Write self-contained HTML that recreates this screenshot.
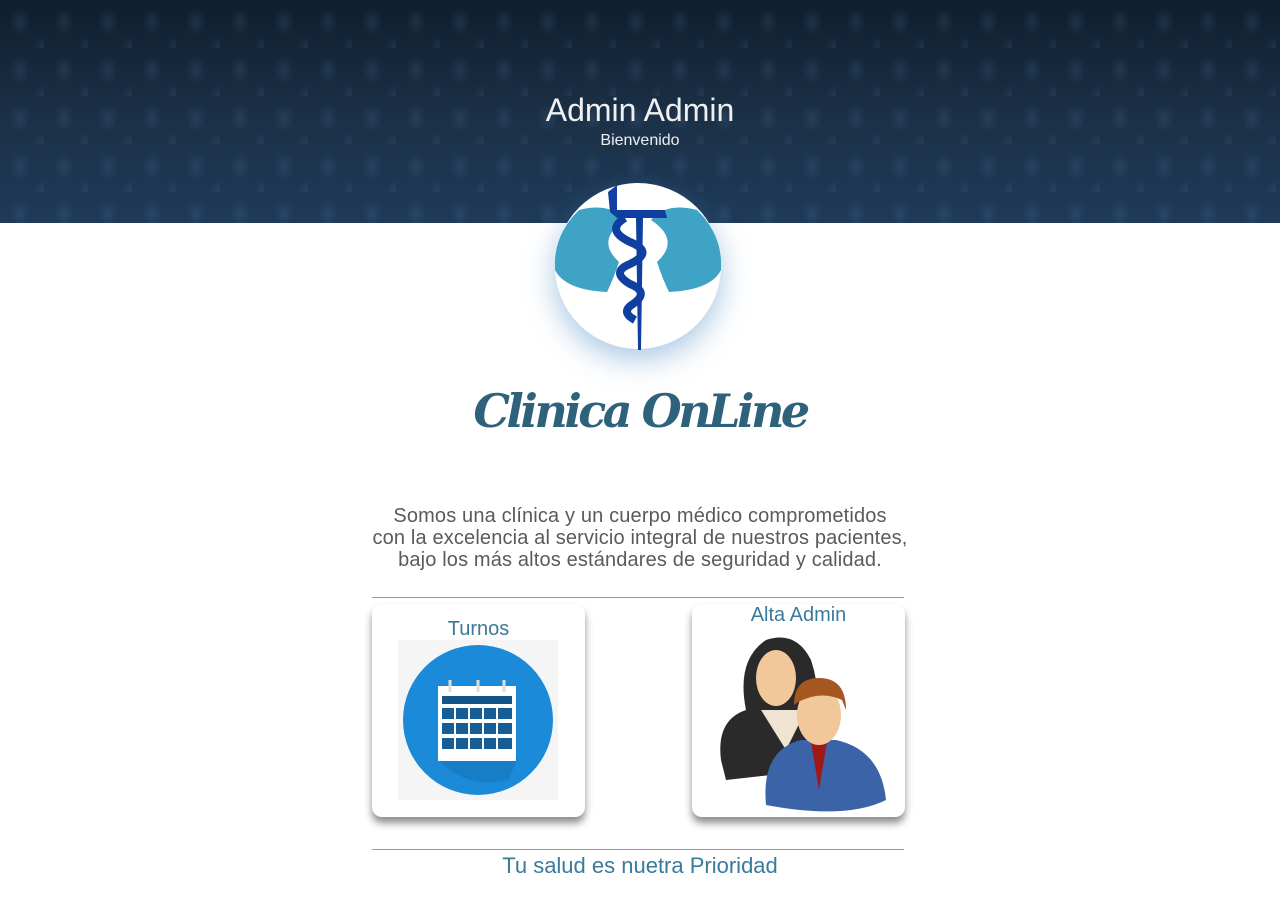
<!DOCTYPE html>
<html><head><meta charset="utf-8"><style>
*{margin:0;padding:0;box-sizing:border-box}
body{width:1280px;height:899px;background:#fff;font-family:"Liberation Sans",sans-serif;position:relative;overflow:hidden}
.hdr{position:absolute;left:0;top:0;width:1280px;height:223px;background:
radial-gradient(ellipse 10px 14px at 20px 22px,rgba(90,130,170,.18),transparent) 0 0/44px 48px,
radial-gradient(ellipse 8px 10px at 42px 46px,rgba(90,130,170,.14),transparent) 0 0/44px 48px,
linear-gradient(#0f1e2e,#1b3148 55%,#1f3a58)}
.t{position:absolute;width:1280px;text-align:center;color:#fff}
.card{position:absolute;top:604px;width:213px;height:213px;background:#fff;border-radius:10px;box-shadow:0 6px 8px rgba(0,0,0,.45)}
.ct{position:absolute;width:100%;text-align:center;color:#3a7a9a;font-size:20px}
hr{position:absolute;left:372px;width:532px;border:0;border-top:1px solid #999}
</style></head><body>
<div class="hdr"></div>
<div class="t" style="top:92px;font-size:32px;color:#f0f0f0">Admin Admin</div>
<div class="t" style="top:132px;font-size:16px;color:#eee">Bienvenido</div>
<div style="position:absolute;left:555px;top:183px;width:166px;height:166px;border-radius:50%;background:#fff;box-shadow:0 10px 30px rgba(60,130,190,.45)"></div>
<svg style="position:absolute;left:555px;top:180px" width="166" height="172" viewBox="0 0 166 172">
<path d="M24 30 Q55 22 70 40 Q40 60 64 82 Q58 100 52 112 Q10 110 0 90 Q-2 55 24 30Z" fill="#3fa3c6"/>
<path d="M142 30 Q111 22 96 40 Q126 60 102 82 Q108 100 114 112 Q156 110 166 90 Q168 55 142 30Z" fill="#3fa3c6"/>
<path d="M53 12 L62 5 L62 30 L110 30 L112 38 L88 38 L86 170 L83 170 L81 38 L62 38 L55 32Z" fill="#0f3fa0"/>
<path d="M70 38 Q50 50 75 62 Q100 72 75 84 Q55 92 75 104 Q95 112 78 124 Q65 132 80 140" fill="none" stroke="#0f3fa0" stroke-width="8"/>
</svg>
<div class="t" style="top:384px;font-size:46px;color:#2e627a;font-family:'DejaVu Serif',serif;font-style:italic;font-weight:bold;letter-spacing:-3.5px">Clinica OnLine</div>
<div class="t" style="top:505px;font-size:20px;color:#5a5a5a;line-height:22px;letter-spacing:.15px">Somos una clínica y un cuerpo médico comprometidos<br>con la excelencia al servicio integral de nuestros pacientes,<br>bajo los más altos estándares de seguridad y calidad.</div>
<hr style="top:597px">
<div class="card" style="left:372px">
<div class="ct" style="top:14px">Turnos</div>
<svg style="position:absolute;left:26px;top:36px" width="160" height="160" viewBox="0 0 160 160">
<rect width="160" height="160" fill="#f5f5f5"/>
<circle cx="80" cy="80" r="75" fill="#1b8ad8"/>
<path d="M40 45 L120 118 L110 140 Q70 150 40 120Z" fill="#1570b5" opacity=".5"/>
<rect x="40" y="46" width="78" height="75" fill="#fff"/>
<rect x="44" y="56" width="70" height="8" fill="#12558a"/>
<g fill="#155d96">
<rect x="44" y="68" width="12" height="11"/><rect x="58" y="68" width="12" height="11"/><rect x="72" y="68" width="12" height="11"/><rect x="86" y="68" width="12" height="11"/><rect x="100" y="68" width="14" height="11"/>
<rect x="44" y="83" width="12" height="11"/><rect x="58" y="83" width="12" height="11"/><rect x="72" y="83" width="12" height="11"/><rect x="86" y="83" width="12" height="11"/><rect x="100" y="83" width="14" height="11"/>
<rect x="44" y="98" width="12" height="11"/><rect x="58" y="98" width="12" height="11"/><rect x="72" y="98" width="12" height="11"/><rect x="86" y="98" width="12" height="11"/><rect x="100" y="98" width="14" height="11"/>
</g>
<g stroke="#ddd" stroke-width="3"><line x1="52" y1="40" x2="52" y2="52"/><line x1="80" y1="40" x2="80" y2="52"/><line x1="106" y1="40" x2="106" y2="52"/></g>
</svg></div>
<div class="card" style="left:692px">
<div class="ct" style="top:0px">Alta Admin</div>
<svg style="position:absolute;left:14px;top:26px" width="190" height="186" viewBox="0 0 190 186">
<path d="M15 130 Q10 90 40 80 Q30 30 60 10 Q90 0 105 30 Q115 60 110 90 L110 140 L20 150Z" fill="#2a2a2a"/>
<ellipse cx="70" cy="48" rx="20" ry="28" fill="#f2c79a"/>
<path d="M55 80 L80 120 L100 80Z" fill="#efe3d2"/>
<path d="M60 175 Q55 120 95 110 L130 110 Q175 120 180 170 Q140 190 60 175Z" fill="#3b63a8"/>
<path d="M105 112 L113 160 L121 112Z" fill="#a01818"/>
<ellipse cx="113" cy="85" rx="22" ry="30" fill="#f2c79a"/>
<path d="M88 75 Q88 48 113 48 Q140 48 140 80 L136 70 Q115 60 92 72Z" fill="#a6561f"/>
</svg></div>
<hr style="top:849px">
<div class="t" style="top:853px;font-size:22px;color:#3a7a9a">Tu salud es nuetra Prioridad</div>
</body></html>
